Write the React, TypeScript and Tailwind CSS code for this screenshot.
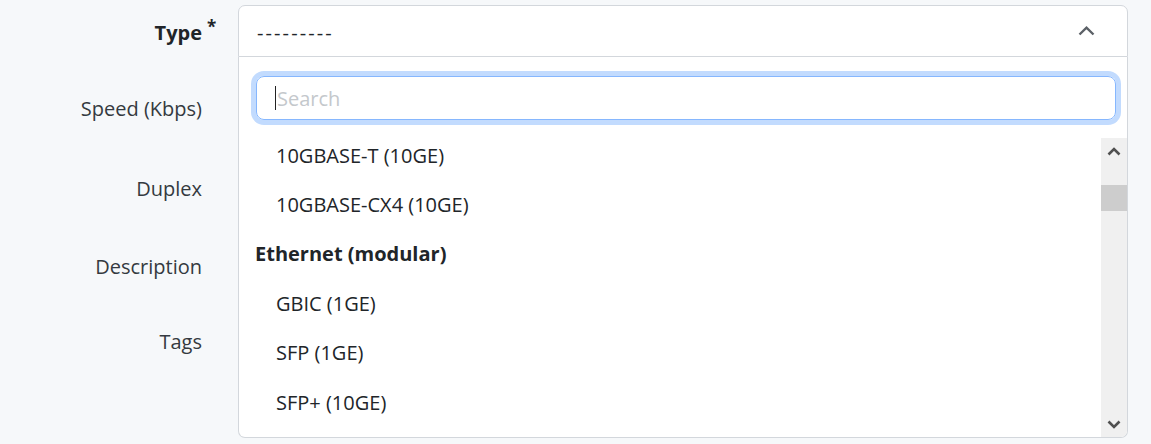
import React from "react"

const options: { label: string; group?: boolean }[] = [
  { label: "10GBASE-T (10GE)" },
  { label: "10GBASE-CX4 (10GE)" },
  { label: "Ethernet (modular)", group: true },
  { label: "GBIC (1GE)" },
  { label: "SFP (1GE)" },
  { label: "SFP+ (10GE)" },
]

function Chevron({ up = true, className = "" }: { up?: boolean; className?: string }) {
  return (
    <svg width="14" height="9" viewBox="0 0 14 9" className={className}>
      <path
        d={up ? "M1.5 7.5 L7 2 L12.5 7.5" : "M1.5 1.5 L7 7 L12.5 1.5"}
        fill="none"
        stroke="#505050"
        strokeWidth="2.6"
      />
    </svg>
  )
}

function Label({ text, required }: { text: string; required?: boolean }) {
  return (
    <div className="w-[202px] shrink-0 text-right text-[#343a40]">
      {required ? (
        <span className="relative font-bold text-[#212529]">
          {text}
          <span className="absolute -top-[5px] left-full ml-[5px] text-[17px]">*</span>
        </span>
      ) : (
        text
      )}
    </div>
  )
}

function TypeSelect() {
  return (
    <div className="relative ml-[36px] mr-[23px] flex-1">
      <div className="flex h-[52px] items-center justify-between rounded-t-[7px] border border-[#d3d7dc] bg-white pl-[18px] pr-[32px] text-[#212529]">
        <span className="pt-[3px] tracking-[2.1px]">---------</span>
        <svg width="17" height="10" viewBox="0 0 17 10">
          <path d="M1.5 8.5 L8.5 1.7 L15.5 8.5" fill="none" stroke="#5c6167" strokeWidth="2.4" />
        </svg>
      </div>
      <div className="absolute left-0 right-0 top-[52px] z-10 h-[381px] overflow-hidden rounded-b-[7px] border-x border-b border-[#d3d7dc] bg-white">
        <div className="pb-[18px] pl-[17px] pr-[11px] pt-[19px]">
          <div className="relative">
            <input
              readOnly
              placeholder="Search"
              className="h-[44px] w-full rounded-[8px] border border-[#86b7fe] pl-[20px] text-[#212529] shadow-[0_0_0_5px_#c2dbfe] outline-none placeholder:text-[#c4c8cc]"
            />
            <span className="absolute left-[19px] top-[10px] h-[24px] w-px bg-[#222]" />
          </div>
        </div>
        <div className="flex h-[299px]">
          <div className="flex-1 overflow-hidden">
            <div className="-mt-[7px]">
              {options.map((o) =>
                o.group ? (
                  <div key={o.label} className="flex h-[49.4px] items-center pl-[16px] font-bold text-[#212529]">
                    {o.label}
                  </div>
                ) : (
                  <div key={o.label} className="flex h-[49.4px] items-center pl-[37px] text-[#212529]">
                    {o.label}
                  </div>
                )
              )}
            </div>
          </div>
          <div className="flex w-[26px] flex-col bg-[#f0f0f0]">
            <div className="flex h-[26px] items-center justify-center">
              <Chevron up />
            </div>
            <div className="mt-[21px] h-[26px] bg-[#cdcdcd]" />
            <div className="flex-1" />
            <div className="flex h-[25px] items-center justify-center">
              <Chevron up={false} />
            </div>
          </div>
        </div>
      </div>
    </div>
  )
}

export default function App() {
  return (
    <div className="min-h-screen bg-[#f6f8fa] pt-[5px] font-['Open_Sans',sans-serif] text-[20px] leading-[1.5]">
      <div className="flex flex-col">
        <div className="flex h-[52px] items-center">
          <div className="w-[202px] shrink-0 pt-[3px]">
            <Label text="Type" required />
          </div>
          <TypeSelect />
        </div>
        <div className="mt-[26px] flex h-[52px] items-center">
          <Label text="Speed (Kbps)" />
        </div>
        <div className="mt-[28px] flex h-[52px] items-center">
          <Label text="Duplex" />
        </div>
        <div className="mt-[26px] flex h-[52px] items-center">
          <Label text="Description" />
        </div>
        <div className="mt-[23px] flex h-[52px] items-center">
          <Label text="Tags" />
        </div>
      </div>
    </div>
  )
}
